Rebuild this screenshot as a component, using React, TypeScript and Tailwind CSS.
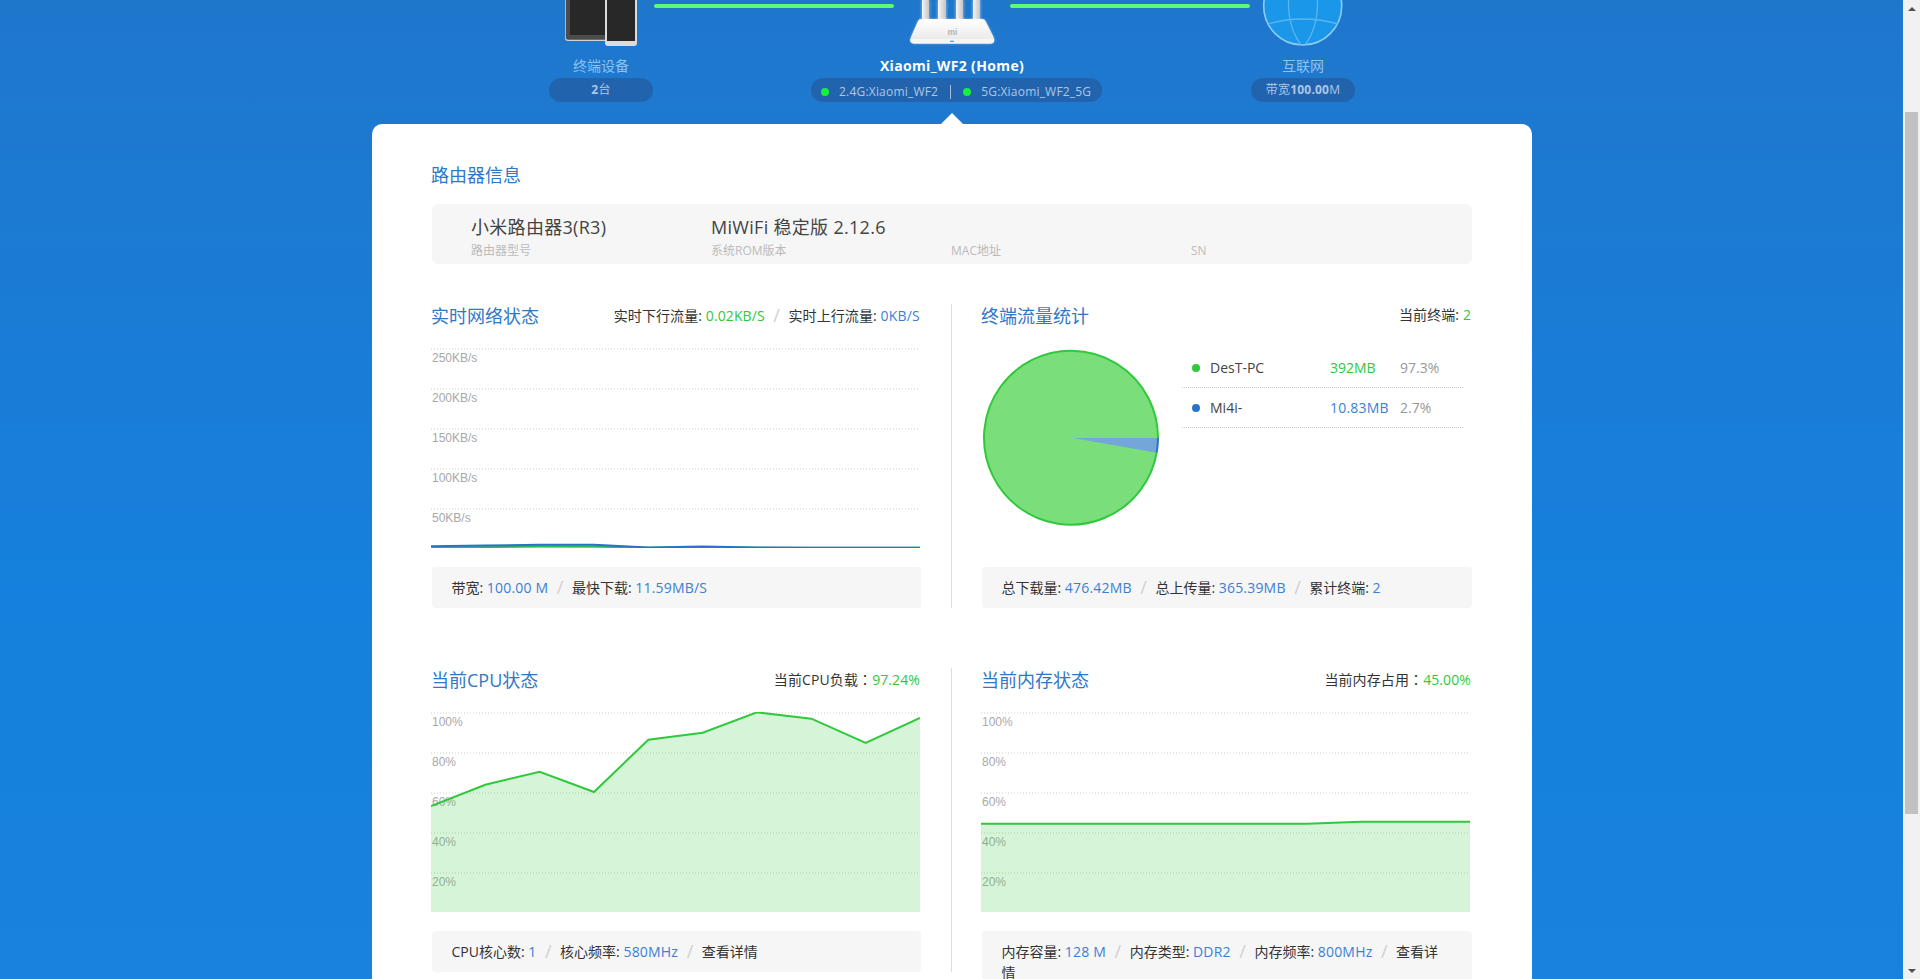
import React from "react";

const BLUE = "text-[#3b7fd4] tracking-[0.2px]";
const GREEN = "text-[#30c83c]";

function Sep() {
  return <span className="mx-[8.5px] inline-block text-[18px] leading-[20px] text-[#d0d0d0] align-[-1px]">/</span>;
}

function Colon() {
  return <span className="font-['Noto_Sans_CJK_TC',sans-serif]">：</span>;
}

function Title({ children }: { children: React.ReactNode }) {
  return <h3 className="-ml-px text-[18px] leading-[24px] font-normal text-[#2f78c8]">{children}</h3>;
}

function PanelHead({ title, children }: { title: string; children: React.ReactNode }) {
  return (
    <div className="flex h-[24px] items-center justify-between mb-[20px]">
      <Title>{title}</Title>
      <div className="pb-[2px] text-[14px] leading-[20px] tracking-[0.1px] text-[#333333] whitespace-nowrap mr-px">{children}</div>
    </div>
  );
}

function Foot({ children }: { children: React.ReactNode }) {
  return (
    <div className="mt-[19px] min-h-[41px] rounded-[4px] bg-[#f6f6f6] pl-[19.5px] pr-[20px] py-[10px] text-[14px] leading-[21px] text-[#333333]">
      {children}
    </div>
  );
}

function Chart({ labels, children }: { labels: string[]; children: React.ReactNode }) {
  return (
    <div className="relative -ml-px h-[200px] w-[489px]">
      {labels.map((l) => (
        <div
          key={l}
          className="h-[40px] bg-[linear-gradient(90deg,#e6e6e6_50%,transparent_50%)] bg-size-[3px_2px] bg-repeat-x pl-px pt-[2px] font-['Liberation_Sans',sans-serif] text-[12px] leading-[16px] text-[#a8a8a8]"
        >
          {l}
        </div>
      ))}
      <svg className="absolute left-0 top-0" width="489" height="200" viewBox="0 0 489 200">
        {children}
      </svg>
    </div>
  );
}

function toPts(ys: number[]) {
  return ys.map((y, i) => `${(i * 489) / 9},${y}`).join(" ");
}

function Area({ ys, color, fill }: { ys: number[]; color: string; fill: string }) {
  return (
    <>
      <polygon points={`0,200 ${toPts(ys)} 489,200`} fill={fill} />
      <polyline points={toPts(ys)} fill="none" stroke={color} strokeWidth="2" />
    </>
  );
}

const PCT = ["100%", "80%", "60%", "40%", "20%"];
const KB = ["250KB/s", "200KB/s", "150KB/s", "100KB/s", "50KB/s"];

function Phones() {
  return (
    <svg width="104" height="56" viewBox="0 0 104 56">
      <rect x="16" y="-30" width="50" height="71" rx="3" fill="#cfd3d8" />
      <rect x="16.8" y="-30" width="48.4" height="69.8" rx="2.5" fill="#4c4c4c" />
      <rect x="21" y="-30" width="40" height="65" fill="#282828" />
      <rect x="56" y="-30" width="32" height="76" rx="3" fill="#dcdcdc" />
      <rect x="58" y="-30" width="28" height="71" fill="#282828" />
    </svg>
  );
}

function Router() {
  const body = "M27 19H88Q90.5 19 91.5 21L99.5 37Q101.5 43 97 43.5H19.5Q15 43 17 37L24 21Q25 19 27 19Z";
  return (
    <svg width="116" height="56" viewBox="0 0 116 56">
      <defs>
        <linearGradient id="ant" x1="0" x2="1" y1="0" y2="0">
          <stop offset="0" stopColor="#f6f6f6" />
          <stop offset="1" stopColor="#c4c4c4" />
        </linearGradient>
        <linearGradient id="body" x1="0" x2="0" y1="0" y2="1">
          <stop offset="0" stopColor="#ffffff" />
          <stop offset="1" stopColor="#e6e6e6" />
        </linearGradient>
        <filter id="glow" x="-20%" y="-20%" width="140%" height="140%">
          <feGaussianBlur stdDeviation="1.2" />
        </filter>
      </defs>
      <path d="M27 0H36V20H27ZM43 0H53V20H43ZM61 0H70V20H61ZM78 0H87V20H78Z" fill="#ffffff" opacity="0.35" filter="url(#glow)" />
      <rect x="28" y="-2" width="7" height="22" fill="url(#ant)" />
      <rect x="44" y="-2" width="8" height="22" fill="url(#ant)" />
      <rect x="62" y="-2" width="7" height="22" fill="url(#ant)" />
      <rect x="79" y="-2" width="7" height="22" fill="url(#ant)" />
      <path d={body} fill="#ffffff" opacity="0.5" filter="url(#glow)" />
      <path d={body} fill="url(#body)" />
      <path d="M16.3 39H100.2Q100.8 43 97 43.5H19.5Q15.8 43 16.3 39Z" fill="#f6f6f6" />
      <text x="58.5" y="35" textAnchor="middle" fontSize="8.5" fontWeight="700" fontFamily="Liberation Sans, sans-serif" fill="#b4b4b4">mi</text>
      <rect x="56" y="40.7" width="4" height="1.2" fill="#20b0e8" />
    </svg>
  );
}

function Globe() {
  return (
    <svg width="104" height="56" viewBox="0 0 104 56">
      <circle cx="51.7" cy="6" r="39" fill="#1a97e9" stroke="#8fcdf5" strokeWidth="1.6" />
      <g fill="none" stroke="#5db5ee" strokeWidth="1.3">
        <path d="M17 24Q51.7 14 87 24" />
        <path d="M42 -30Q30 18 50 45" />
        <path d="M62 -30Q74 18 54 45" />
      </g>
    </svg>
  );
}

function Pill({ children, className }: { children: React.ReactNode; className: string }) {
  return (
    <div className={"flex h-[24px] items-center rounded-[12px] bg-[#2263ae] text-[12px] text-[#aec7e6] tracking-[0.2px] " + className}>
      {children}
    </div>
  );
}

function Dot({ color, size = "size-[8px]" }: { color: string; size?: string }) {
  return <span className={"inline-block shrink-0 rounded-full " + color + " " + size} />;
}

function Line() {
  return <div className="mt-[4px] h-[4px] w-[240px] rounded-[2px] bg-[#5dfb6f]" />;
}

function Top() {
  return (
    <div className="ml-[549px] h-[124px] w-[806px] relative overflow-hidden">
      <div className="flex h-[56px] items-start">
        <Phones />
        <div className="ml-px"><Line /></div>
        <Router />
        <Line />
        <div className="ml-px"><Globe /></div>
      </div>
      <div className="flex items-start justify-between">
        <div className="flex w-[104px] flex-col items-center">
          <div className="h-[22px] text-[14px] leading-[20px] text-[#8cc3f2]">终端设备</div>
          <Pill className="w-[104px] justify-center"><b>2</b>台</Pill>
        </div>
        <div className="flex w-[291px] flex-col items-center">
          <div className="h-[22px] text-[14px] leading-[20px] font-bold text-white tracking-[0.35px]">Xiaomi_WF2 (Home)</div>
          <Pill className="ml-[9px] w-[291px] pl-[10px] pt-[3px]">
            <Dot color="bg-[#14f03c]" />
            <span className="ml-[10px]">2.4G:Xiaomi_WF2</span>
            <span className="mx-[12px] h-[14px] w-px bg-[#a3bedf]" />
            <Dot color="bg-[#14f03c]" />
            <span className="ml-[10px]">5G:Xiaomi_WF2_5G</span>
          </Pill>
        </div>
        <div className="flex w-[104px] flex-col items-center">
          <div className="h-[22px] text-[14px] leading-[20px] text-[#8cc3f2]">互联网</div>
          <Pill className="w-[104px] justify-center">带宽<b>100.00</b>M</Pill>
        </div>
      </div>
      <div className="absolute bottom-0 left-[392px] size-0 border-x-[11px] border-b-[11px] border-x-transparent border-b-white" />
    </div>
  );
}

function Info() {
  const cols = [
    ["小米路由器3(R3)", "路由器型号"],
    ["MiWiFi 稳定版 2.12.6", "系统ROM版本"],
    ["", "MAC地址"],
    ["", "SN"],
  ];
  return (
    <div className="mt-[17px] flex h-[60px] rounded-[6px] bg-[#f6f6f6] pl-[39px]">
      {cols.map(([v, l]) => (
        <div key={l} className="w-[240px] pt-[11px]">
          <div className="h-[24px] text-[18px] leading-[24px] text-[#444444] tracking-[0.3px]">{v}</div>
          <div className="text-[12px] leading-[24px] text-[#bbbbbb]">{l}</div>
        </div>
      ))}
    </div>
  );
}

function Pie() {
  return (
    <svg className="mt-px shrink-0" width="178" height="178" viewBox="0 0 178 178">
      <circle cx="89" cy="89" r="87" fill="#7ade7a" />
      <path d="M91 89L176 89A87 87 0 0 1 174.7 103.7Z" fill="#75a6da" />
      <path d="M174.7 103.7A87 87 0 1 1 176 89" fill="none" stroke="#30c83c" strokeWidth="2" />
      <path d="M176 89A87 87 0 0 1 174.7 103.7" fill="none" stroke="#2a72c8" strokeWidth="2" />
    </svg>
  );
}

function Row({ dot, name, val, valCls, pct }: { dot: string; name: string; val: string; valCls: string; pct: string }) {
  return (
    <div className="flex h-[40px] items-center border-b border-dotted border-[#cccccc] pl-[10px] text-[14px]">
      <Dot color={dot} />
      <span className="ml-[10px] w-[120px] text-[#444444]">{name}</span>
      <span className={"w-[70px] " + valCls}>{val}</span>
      <span className="text-[#999999]">{pct}</span>
    </div>
  );
}

export default function App() {
  return (
    <div className="flex h-[979px] w-full overflow-hidden font-['Open_Sans','Noto_Sans_CJK_SC',sans-serif]">
      <main className="h-full w-[1903px] overflow-hidden bg-linear-to-b from-[#1f77cc] via-[#1580dd] via-60% to-[#1981de]">
        <Top />
        <div className="ml-[372px] w-[1160px] rounded-t-[10px] bg-white px-[60px] pt-[39px] pb-[40px]">
          <Title>路由器信息</Title>
          <Info />

          <div className="mt-[40px] flex items-start">
            <section className="w-[520px] border-r border-[#dddddd] pr-[30px]">
              <PanelHead title="实时网络状态">
                实时下行流量: <span className={GREEN}>0.02KB/S</span><Sep />实时上行流量: <span className={BLUE}>0KB/S</span>
              </PanelHead>
              <Chart labels={KB}>
                <Area ys={[199.4, 199, 198.2, 198.5, 199.7, 199.5, 199.7, 199.8, 199.8, 199.8]} color="#30c83c" fill="rgba(48,200,60,0.2)" />
                <Area ys={[198.3, 197.6, 196.8, 196.8, 199.4, 198.6, 199.4, 199.8, 199.8, 199.8]} color="#2a72c8" fill="rgba(42,114,200,0.2)" />
              </Chart>
              <Foot>
                带宽: <span className={BLUE}>100.00 M</span><Sep />最快下载: <span className={BLUE}>11.59MB/S</span>
              </Foot>
            </section>
            <section className="w-[520px] pl-[30px]">
              <PanelHead title="终端流量统计">
                当前终端: <span className={GREEN}>2</span>
              </PanelHead>
              <div className="flex h-[200px] items-start">
                <Pie />
                <div className="ml-[22px] w-[281px]">
                  <Row dot="bg-[#30c83c]" name="DesT-PC" val="392MB" valCls={GREEN} pct="97.3%" />
                  <Row dot="bg-[#2a72c8]" name="Mi4i-" val="10.83MB" valCls={BLUE} pct="2.7%" />
                </div>
              </div>
              <Foot>
                总下载量: <span className={BLUE}>476.42MB</span><Sep />总上传量: <span className={BLUE}>365.39MB</span><Sep />累计终端: <span className={BLUE}>2</span>
              </Foot>
            </section>
          </div>

          <div className="mt-[60px] flex items-start">
            <section className="w-[520px] border-r border-[#dddddd] pr-[30px]">
              <PanelHead title="当前CPU状态">
                当前CPU负载<Colon /><span className={GREEN}>97.24%</span>
              </PanelHead>
              <Chart labels={PCT}>
                <Area ys={[94, 72.7, 59.7, 80, 27.7, 20.7, 0.3, 6.7, 31, 6]} color="#30c83c" fill="rgba(48,205,60,0.2)" />
              </Chart>
              <Foot>
                CPU核心数: <span className={BLUE}>1</span><Sep />核心频率: <span className={BLUE}>580MHz</span><Sep />查看详情
              </Foot>
            </section>
            <section className="w-[520px] pl-[30px]">
              <PanelHead title="当前内存状态">
                当前内存占用<Colon /><span className={GREEN}>45.00%</span>
              </PanelHead>
              <Chart labels={PCT}>
                <Area ys={[111.7, 111.7, 111.7, 111.7, 111.7, 111.7, 111.7, 109.7, 109.7, 109.7]} color="#30c83c" fill="rgba(48,205,60,0.2)" />
              </Chart>
              <Foot>
                内存容量: <span className={BLUE}>128 M</span><Sep />内存类型: <span className={BLUE}>DDR2</span><Sep />内存频率: <span className={BLUE}>800MHz</span><Sep />查看详<br />情
              </Foot>
            </section>
          </div>
        </div>
      </main>
      <aside className="flex h-full w-[17px] flex-col bg-[#f1f1f1]">
        <div className="flex h-[17px] items-center justify-center">
          <div className="size-0 border-x-[4px] border-b-[4px] border-x-transparent border-b-[#505050]" />
        </div>
        <div className="ml-[2px] mt-[95px] h-[702px] w-[13px] bg-[#c1c1c1]" />
        <div className="mt-auto flex h-[17px] items-center justify-center">
          <div className="size-0 border-x-[4px] border-t-[4px] border-x-transparent border-t-[#505050]" />
        </div>
      </aside>
    </div>
  );
}
